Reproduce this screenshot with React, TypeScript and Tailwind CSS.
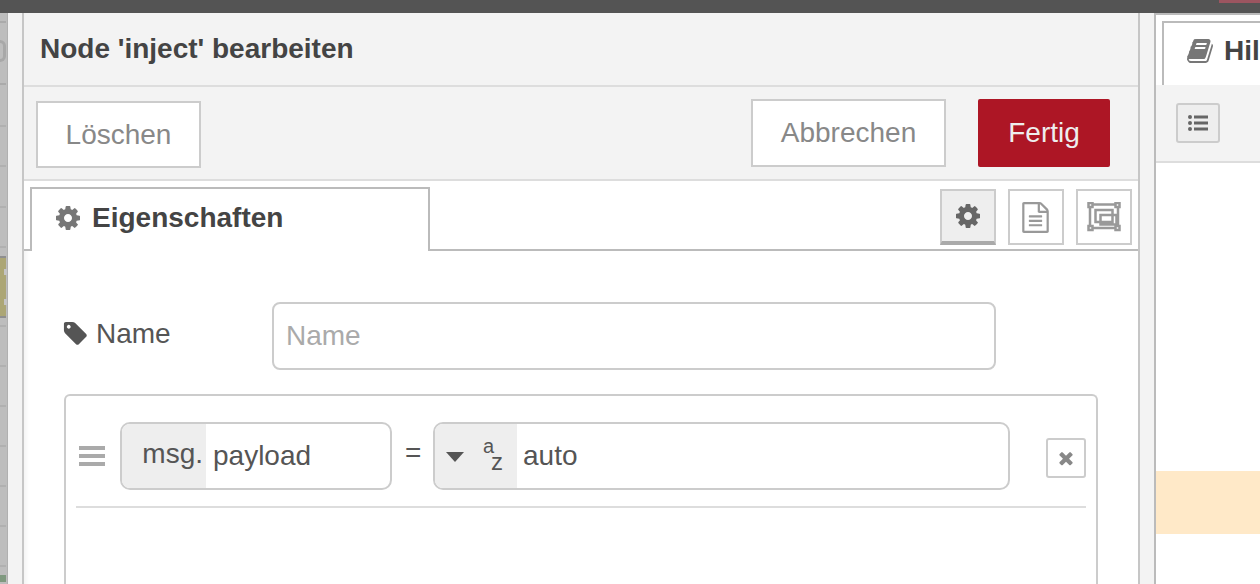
const sans = "font-['Liberation_Sans',Arial,sans-serif]";

const COG =
  "M1152 896q0-106-75-181t-181-75-181 75-75 181 75 181 181 75 181-75 75-181zm512-109v222q0 12-8 23t-20 13l-185 28q-19 54-39 91 35 50 107 138 10 12 10 25t-9 23q-27 37-99 108t-94 71q-12 0-26-9l-138-108q-44 23-91 38-16 136-29 186-7 28-36 28h-222q-14 0-24.5-8.5t-11.5-21.5l-28-184q-49-16-90-37l-141 107q-10 9-25 9-14 0-25-11-126-114-165-168-7-10-7-23 0-12 8-23 15-21 51-66.5t54-70.5q-27-50-41-99l-183-27q-13-2-21-12.5t-8-23.5v-222q0-12 8-23t19-13l186-28q14-46 39-92-40-57-107-138-10-12-10-24 0-10 9-23 26-36 98.5-107.5t94.5-71.5q13 0 26 10l138 107q44-23 91-38 16-136 29-186 7-28 36-28h222q14 0 24.5 8.5t11.5 21.5l28 184q49 16 90 37l142-107q9-9 24-9 13 0 25 10 129 119 165 170 7 8 7 22 0 12-8 23-15 21-51 66.5t-54 70.5q26 50 41 98l183 28q13 2 21 12.5t8 23.5z";
const TAG =
  "M576 448q0-53-37.5-90.5t-90.5-37.5-90.5 37.5-37.5 90.5 37.5 90.5 90.5 37.5 90.5-37.5 37.5-90.5zm1067 576q0 53-37 90l-491 492q-39 37-91 37-53 0-90-37l-715-716q-38-37-64.5-101t-26.5-117v-416q0-52 38-90t90-38h416q53 0 117 26.5t102 64.5l715 714q37 39 37 91z";
const BOOK =
  "M1703 478q40 57 18 129l-275 906q-19 64-76.5 107.5t-122.5 43.5h-923q-77 0-148.5-53.5t-99.5-131.5q-24-67-2-127 0-4 3-27t4-37q1-8-3-21.5t-3-19.5q2-11 8-21t16.5-23.5 16.5-23.5q23-38 45-91.5t30-91.5q3-10 .5-30t-.5-28q3-11 17-28t17-23q21-36 42-92t25-90q1-9-2.5-32t.5-28q4-13 22-30.5t22-22.5q19-26 42.5-84.5t27.5-96.5q1-8-3-25.5t-2-26.5q2-8 9-18t18-23 17-21q8-12 16.5-30.5t15-35 16-36 19.5-32 26.5-23.5 36-11.5 47.5 5.5l-1 3q38-9 51-9h761q74 0 114 56t18 130l-274 906q-36 119-71.5 153.5t-128.5 34.5h-869q-27 0-38 15-11 16-1 43 24 70 144 70h923q29 0 56-15.5t35-41.5l300-987q7-22 5-57 38 15 59 43zm-1064 2q-4 13 2 22.5t20 9.5h608q13 0 25.5-9.5t16.5-22.5l21-64q4-13-2-22.5t-20-9.5h-608q-13 0-25.5 9.5t-16.5 22.5zm-83 256q-4 13 2 22.5t20 9.5h608q13 0 25.5-9.5t16.5-22.5l21-64q4-13-2-22.5t-20-9.5h-608q-13 0-25.5 9.5t-16.5 22.5z";
const FILE =
  "M1596 380q28 28 48 76t20 88v1152q0 40-28 68t-68 28h-1344q-40 0-68-28t-28-68v-1600q0-40 28-68t68-28h896q40 0 88 20t76 48zm-444-244v376h376q-10-29-22-41l-313-313q-12-12-41-22zm384 1528v-1024h-416q-40 0-68-28t-28-68v-416h-768v1536h1280zm-1024-864q0-14 9-23t23-9h704q14 0 23 9t9 23v64q0 14-9 23t-23 9h-704q-14 0-23-9t-9-23v-64zm736 224q14 0 23 9t9 23v64q0 14-9 23t-23 9h-704q-14 0-23-9t-9-23v-64q0-14 9-23t23-9h704zm0 256q14 0 23 9t9 23v64q0 14-9 23t-23 9h-704q-14 0-23-9t-9-23v-64q0-14 9-23t23-9h704z";
const TIMES =
  "M1490 1322q0 40-28 68l-136 136q-28 28-68 28t-68-28l-294-294-294 294q-28 28-68 28t-68-28l-136-136q-28-28-28-68t28-68l294-294-294-294q-28-28-28-68t28-68l136-136q28-28 68-28t68 28l294 294 294-294q28-28 68-28t68 28l136 136q28 28 28 68t-28 68l-294 294 294 294q28 28 28 68z";

const Fa = ({ d, className }: { d: string; className: string }) => (
  <svg viewBox="0 0 1792 1792" className={className} fill="currentColor">
    <path d={d} />
  </svg>
);

// the dimmed workspace peeking out on the left
const Workspace = () => (
  <div className="flex w-[8px] shrink-0 flex-col border-r border-[#b0b0b0] bg-[#bdbdbd]">
    <div className="mt-[8px] h-[2px] w-[6px] bg-[#aaaaaa]" />
    <div className="mt-[17px] h-[22px] w-[6px] rounded-r-full border-y-[3px] border-r-[3px] border-[#a8a8a8]" />
    <div className="mt-[21px] h-[2px] w-[6px] bg-[#aaaaaa]" />
    <div className="mt-[40px] h-[2px] w-[6px] bg-[#b0b0b0]" />
    <div className="mt-[38px] h-[2px] w-[6px] bg-[#b0b0b0]" />
    <div className="mt-[39px] h-[2px] w-[6px] bg-[#b0b0b0]" />
    <div className="mt-[38px] h-[2px] w-[6px] bg-[#b0b0b0]" />
    <div className="relative mt-[8px] h-[62px] w-[6px] border-y-2 border-[#8f8f8f] bg-[#aca675]">
      <div className="absolute left-[4px] top-[11px] h-[6px] w-[3px] bg-[#c4c4c4]" />
      <div className="absolute left-[4px] top-[41px] h-[6px] w-[3px] bg-[#c4c4c4]" />
    </div>
    <div className="mt-[7px] h-[2px] w-[6px] bg-[#b0b0b0]" />
    <div className="mt-[38px] h-[2px] w-[6px] bg-[#b0b0b0]" />
    <div className="mt-[38px] h-[2px] w-[6px] bg-[#b0b0b0]" />
    <div className="mt-[38px] h-[2px] w-[6px] bg-[#b0b0b0]" />
    <div className="mt-[38px] h-[2px] w-[6px] bg-[#b0b0b0]" />
    <div className="mt-[38px] h-[2px] w-[6px] bg-[#b0b0b0]" />
    <div className="mt-[38px] h-[2px] w-[6px] bg-[#b0b0b0]" />
    <div className="mt-[8px] h-[7px] w-[6px] bg-[#7f997f]" />
  </div>
);

const IconTab = ({ active, children }: { active?: boolean; children: React.ReactNode }) => (
  <div
    className={`flex h-[56px] w-[56px] items-center justify-center border-2 border-[#cccccc] ${
      active ? "border-b-[4px] border-b-[#aaaaaa] bg-[#eeeeee]" : "bg-white"
    }`}
  >
    {children}
  </div>
);

const EditPanel = () => (
  <div className="flex w-[1118px] shrink-0 flex-col overflow-hidden border-x-2 border-[#c6c6c6] bg-white">
    <div className="flex h-[74px] shrink-0 items-center border-b-2 border-[#dddddd] bg-[#f3f3f3] pl-[16px]">
      <span className="text-[28px] font-bold text-[#444444]">Node 'inject' bearbeiten</span>
    </div>

    <div className="flex h-[94px] shrink-0 items-start justify-between border-b-2 border-[#dddddd] bg-[#f3f3f3] pl-[12px] pr-[28px]">
      <button className="mt-[14px] h-[67px] w-[165px] border-2 border-[#cccccc] bg-white text-[28px] text-[#888888]">
        Löschen
      </button>
      <div className="mt-[12px] flex gap-[32px]">
        <button className="h-[68px] w-[195px] border-2 border-[#cccccc] bg-white text-[28px] text-[#888888]">
          Abbrechen
        </button>
        <button className="h-[68px] w-[132px] rounded-[2px] bg-[#ad1625] text-[28px] text-[#eeeeee]">Fertig</button>
      </div>
    </div>

    <div className="flex h-[70px] shrink-0 items-start border-b-2 border-[#bbbbbb] pl-[6px] pr-[6px]">
      <div className="mt-[6px] flex h-[64px] w-[400px] items-center border-2 border-b-0 border-[#bbbbbb] bg-white pb-[4px] pl-[22px]">
        <Fa d={COG} className="mr-[10px] h-[28px] w-[28px] text-[#777777]" />
        <span className="text-[28px] font-bold text-[#444444]">Eigenschaften</span>
      </div>
      <div className="ml-auto mt-[8px] flex gap-[12px]">
        <IconTab active>
          <Fa d={COG} className="h-[28px] w-[28px] text-[#666666]" />
        </IconTab>
        <IconTab>
          <Fa d={FILE} className="h-[31px] w-[31px] -translate-x-[1px] text-[#999999]" />
        </IconTab>
        <IconTab>
          <svg viewBox="0 0 34 30" className="h-[30px] w-[34px]" fill="none" stroke="#999999" strokeWidth="2.5">
            <path d="M3 2.500h28M3 26h28M3 2.500v23.500M31 2.500v23.500" />
            <path d="M8.500 8h17v12h-17zM13.500 13h16v9.500h-16z" />
            <path d="M1.500 1h4v4h-4zM28.500 1h4v4h-4zM1.500 24h4v4h-4zM28.500 24h4v4h-4z" fill="#ffffff" />
          </svg>
        </IconTab>
      </div>
    </div>

    <div className="flex flex-col pl-[40px] pr-[40px] pt-[51px] shadow-[inset_6px_0_5px_-4px_rgba(0,0,0,0.06)]">
      <div className="flex items-center">
        <Fa d={TAG} className="-ml-[2px] mb-[5px] h-[27px] w-[27px] text-[#555555]" />
        <span className="ml-[7px] w-[176px] pb-[4px] text-[28px] text-[#555555]">Name</span>
        <div className="flex h-[68px] w-[724px] items-center rounded-[8px] border-2 border-[#cccccc] pl-[12px] text-[28px] text-[#aaaaaa]">
          Name
        </div>
      </div>

      <div className="mt-[24px] h-[300px] w-[1034px] grow rounded-t-[6px] border-2 border-b-0 border-[#cccccc] px-[10px] pt-[26px]">
        <div className="flex items-center">
          <div className="ml-[3px] flex w-[26px] flex-col gap-[4px]">
            <div className="h-[4px] bg-[#aaaaaa]" />
            <div className="h-[4px] bg-[#aaaaaa]" />
            <div className="h-[4px] bg-[#aaaaaa]" />
          </div>
          <div className="ml-[15px] flex h-[68px] w-[272px] overflow-hidden rounded-[10px] border-2 border-[#cccccc] text-[28px] text-[#555555]">
            <div className="flex w-[84px] items-center justify-end bg-[#eeeeee] pb-[4px] pr-[3px]">msg.</div>
            <div className="flex items-center pl-[7px]">payload</div>
          </div>
          <span className="ml-[13px] w-[28px] pb-[6px] text-[28px] text-[#555555]">=</span>
          <div className="flex h-[68px] w-[577px] overflow-hidden rounded-[10px] border-2 border-[#cccccc] text-[28px] text-[#555555]">
            <div className="relative w-[82px] bg-[#eeeeee]">
              <svg viewBox="0 0 18 10" className="absolute left-[11px] top-[28px] h-[10px] w-[18px]" fill="#555555">
                <path d="M0 0h18l-9 10z" />
              </svg>
              <span className="absolute left-[48px] top-[15px] text-[20px] leading-[14px]">a</span>
              <span className="absolute left-[56px] top-[29px] text-[24px] leading-[18px]">z</span>
            </div>
            <div className="flex items-center pl-[6px]">auto</div>
          </div>
          <div className="ml-[36px] mt-[4px] flex h-[40px] w-[40px] items-center justify-center rounded-[3px] border-2 border-[#cccccc]">
            <Fa d={TIMES} className="h-[20px] w-[20px] text-[#888888]" />
          </div>
        </div>
        <div className="mt-[16px] h-[2px] bg-[#dddddd]" />
      </div>
    </div>
  </div>
);

const Sidebar = () => (
  <div className="flex min-w-0 grow flex-col border-l-2 border-[#bbbbbb] bg-white">
    <div className="flex h-[72px] shrink-0 items-end border-t-2 border-[#bbbbbb] pl-[6px]">
      <div className="flex h-[64px] grow items-center overflow-hidden border-l-2 border-t-2 border-[#bbbbbb] pb-[6px] pl-[22px]">
        <Fa d={BOOK} className="mr-[10px] h-[28px] w-[28px] shrink-0 text-[#777777]" />
        <span className="text-[28px] font-bold text-[#444444]">Hil</span>
      </div>
    </div>
    <div className="flex h-[78px] shrink-0 items-start border-b-2 border-[#dddddd] bg-[#f3f3f3] pl-[20px] pt-[18px]">
      <div className="flex h-[40px] w-[44px] items-center justify-center rounded-[3px] border-2 border-[#cccccc] bg-[#eeeeee]">
        <svg viewBox="0 0 20 16" className="h-[16px] w-[20px]" fill="#666666">
          <circle cx="2" cy="2" r="2" />
          <circle cx="2" cy="8" r="2" />
          <circle cx="2" cy="14" r="2" />
          <path d="M6 .5h14v3H6zM6 6.500h14v3H6zM6 12.500h14v3H6z" />
        </svg>
      </div>
    </div>
    <div className="mt-[308px] h-[63px] bg-[#ffe9c8]" />
  </div>
);

export default function App() {
  return (
    <div className={`flex h-[584px] w-[1260px] flex-col overflow-hidden bg-[#f3f3f3] ${sans}`}>
      <div className="flex h-[13px] shrink-0 justify-end bg-[#545454]">
        <div className="h-[3px] w-[41px] bg-[#9c5560]" />
      </div>
      <div className="flex min-h-0 grow">
        <Workspace />
        <div className="w-[14px] shrink-0" />
        <EditPanel />
        <div className="w-[14px] shrink-0" />
        <Sidebar />
      </div>
    </div>
  );
}
